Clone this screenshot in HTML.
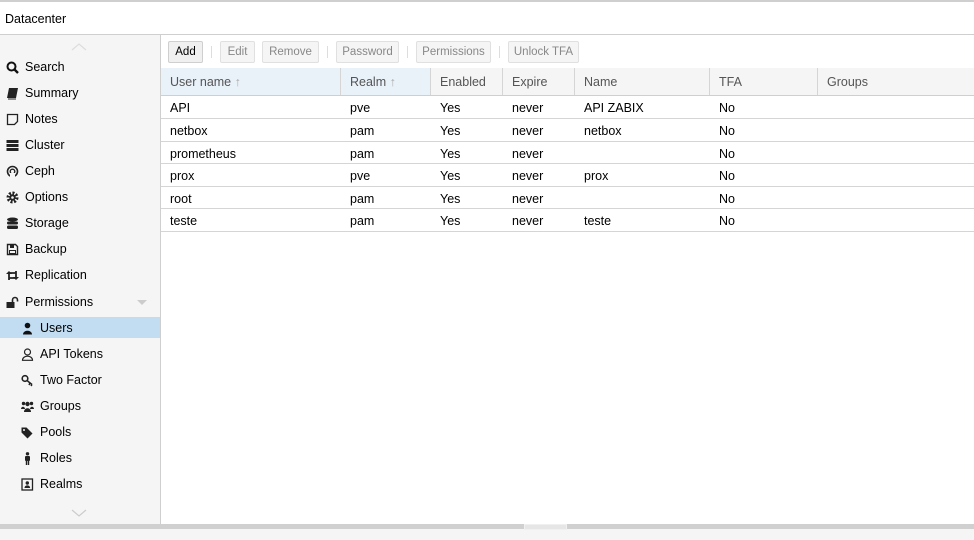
<!DOCTYPE html>
<html><head><meta charset="utf-8"><style>
*{margin:0;padding:0;box-sizing:border-box}
body{width:974px;height:540px;overflow:hidden;background:#fff;font-family:"Liberation Sans",Arial,sans-serif;font-size:12px;color:#000;position:relative}
.a{position:absolute}
.topb{left:0;top:0;width:974px;height:2px;background:#cfcfcf}
.hdr{left:0;top:2px;width:974px;height:33px;border-bottom:1px solid #cfcfcf;background:#fff}
.hdr span{position:absolute;left:5px;top:10px;font-size:12.5px}
.side{left:0;top:35px;width:161px;height:489px;background:#f5f5f5;border-right:1px solid #cfcfcf}
.it{position:absolute;left:0;width:160px;height:21px;line-height:21px;font-size:12.5px}
.it .ic{position:absolute;left:6px;top:5px;width:13px;height:13px}
.it .t{position:absolute;left:25px;top:1px}
.sub .ic{left:21px}.sub .t{left:40px}
.sel{background:#c2ddf2}
.tb{left:161px;top:35px;width:813px;height:33px;background:#fff}
.btn{position:absolute;top:6px;height:22px;line-height:20px;border:1px solid #e0e0e0;border-radius:2px;background:#f5f5f5;color:#888;font-size:11.5px;text-align:center}
.btn.on{color:#000;border-color:#cfcfcf;background:#f0f0f0}
.sep{position:absolute;top:11px;width:1px;height:12px;background:#ddd}
.gh{left:161px;top:68px;width:813px;height:28px;background:#f5f5f5;border-bottom:1px solid #cfcfcf}
.gh div{position:absolute;top:0;height:27px;line-height:28px;padding-left:9px;color:#555;font-size:12.5px;border-right:1px solid #d5d5d5}
.row{position:absolute;left:161px;width:813px;border-bottom:1px solid #d5d5d5;font-size:12.5px}
.row div{position:absolute;top:5px}
.bot{left:0;top:524px;width:974px;height:5px;background:#d0d0d0}
.bot2{left:0;top:529px;width:974px;height:11px;background:#f5f5f5}
</style></head><body>
<div class="a topb"></div>
<div class="a hdr"><span>Datacenter</span></div>
<div class="a side">
<svg class="a" style="left:71px;top:8px" width="16" height="8"><path d="M1 7L8 1L15 7" fill="none" stroke="#ddd" stroke-width="1.2"/></svg>
<div class="it" style="top:21px"><svg class="ic" viewBox="0 0 13 13"><circle cx="5.5" cy="5.5" r="4" fill="none" stroke="#111" stroke-width="2"/><path d="M8.5 8.5L12 12" stroke="#111" stroke-width="2.4"/></svg><span class="t">Search</span></div>
<div class="it" style="top:47px"><svg class="ic" viewBox="0 0 13 13"><path d="M3 1h9l-2 10H1z" fill="#222"/><path d="M2 12h8" stroke="#222"/></svg><span class="t">Summary</span></div>
<div class="it" style="top:73px"><svg class="ic" viewBox="0 0 13 13"><path d="M1.5 1.5h10v7l-3 3h-7z" fill="none" stroke="#222" stroke-width="1.3"/></svg><span class="t">Notes</span></div>
<div class="it" style="top:99px"><svg class="ic" viewBox="0 0 13 13"><rect x="0.5" y="1" width="12" height="3" fill="#222"/><rect x="0.5" y="5" width="12" height="3" fill="#222"/><rect x="0.5" y="9" width="12" height="3" fill="#222"/></svg><span class="t">Cluster</span></div>
<div class="it" style="top:125px"><svg class="ic" viewBox="0 0 13 13"><circle cx="6.5" cy="6.5" r="5" fill="none" stroke="#222" stroke-width="1.6"/><circle cx="6.5" cy="6.5" r="2.3" fill="none" stroke="#222" stroke-width="1.4"/><rect x="4" y="8" width="5" height="5" fill="#f5f5f5"/></svg><span class="t">Ceph</span></div>
<div class="it" style="top:151px"><svg class="ic" viewBox="0 0 13 13"><circle cx="6.5" cy="6.5" r="4.5" fill="none" stroke="#222" stroke-width="3" stroke-dasharray="2 1.5"/><circle cx="6.5" cy="6.5" r="3.2" fill="#222"/><circle cx="6.5" cy="6.5" r="1.3" fill="#f5f5f5"/></svg><span class="t">Options</span></div>
<div class="it" style="top:177px"><svg class="ic" viewBox="0 0 13 13"><ellipse cx="6.5" cy="2.5" rx="5.5" ry="2" fill="#222"/><rect x="1" y="4.5" width="11" height="3" rx="1.5" fill="#222"/><rect x="1" y="8.5" width="11" height="3.5" rx="1.5" fill="#222"/></svg><span class="t">Storage</span></div>
<div class="it" style="top:203px"><svg class="ic" viewBox="0 0 13 13"><path d="M1.5 1.5h8l2 2v8h-10z" fill="none" stroke="#222" stroke-width="1.4"/><rect x="4" y="2" width="4" height="3" fill="#222"/><rect x="3.5" y="7.5" width="6" height="3" fill="none" stroke="#222"/></svg><span class="t">Backup</span></div>
<div class="it" style="top:229px"><svg class="ic" viewBox="0 0 13 13"><path d="M3 11V4h7M10 2v7H3" fill="none" stroke="#222" stroke-width="1.8"/><path d="M0 5l3-3 3 3zM7 8l3 3 3-3z" fill="#222"/></svg><span class="t">Replication</span></div>
<div class="it" style="top:256px"><svg class="ic" viewBox="0 0 13 13"><rect x="0.5" y="6" width="8" height="6" fill="#222"/><path d="M6.5 6V4a2.5 2.5 0 0 1 5 0v1.5" fill="none" stroke="#222" stroke-width="1.6"/></svg><span class="t">Permissions</span><svg class="a" style="left:137px;top:9px" width="10" height="5"><path d="M0 0h10L5 5z" fill="#ccc"/></svg></div>
<div class="it sub sel" style="top:282px"><svg class="ic" viewBox="0 0 13 13"><circle cx="6.5" cy="3.5" r="2.8" fill="#111"/><path d="M2 12.5c0-5 9-5 9 0z" fill="#111"/></svg><span class="t">Users</span></div>
<div class="it sub" style="top:308px"><svg class="ic" viewBox="0 0 13 13"><circle cx="6.5" cy="4" r="3" fill="none" stroke="#222" stroke-width="1.2"/><path d="M1.5 12.3c0-5.5 10-5.5 10 0z" fill="none" stroke="#222" stroke-width="1.2"/></svg><span class="t">API Tokens</span></div>
<div class="it sub" style="top:334px"><svg class="ic" viewBox="0 0 13 13"><circle cx="4" cy="4.5" r="2.8" fill="none" stroke="#222" stroke-width="1.6"/><path d="M6 6.5l5 4M9 9l-1 2M11 10.5l-1 1.5" stroke="#222" stroke-width="1.5" fill="none"/></svg><span class="t">Two Factor</span></div>
<div class="it sub" style="top:360px"><svg class="ic" viewBox="0 0 13 13"><circle cx="6.5" cy="4" r="2.2" fill="#222"/><circle cx="2.5" cy="3.5" r="1.7" fill="#222"/><circle cx="10.5" cy="3.5" r="1.7" fill="#222"/><path d="M3 12c0-5 7-5 7 0z" fill="#222"/><path d="M0 9c0-3 4-3 4 0zM9 9c0-3 4-3 4 0z" fill="#222"/></svg><span class="t">Groups</span></div>
<div class="it sub" style="top:386px"><svg class="ic" viewBox="0 0 13 13"><path d="M0.5 1.5h5l6 6-5 5-6-6z" fill="#222"/><circle cx="3" cy="4" r="1" fill="#f5f5f5"/></svg><span class="t">Pools</span></div>
<div class="it sub" style="top:412px"><svg class="ic" viewBox="0 0 13 13"><circle cx="6.5" cy="1.8" r="1.7" fill="#222"/><rect x="4" y="4" width="5" height="5" rx="1" fill="#222"/><rect x="4.8" y="8" width="1.4" height="5" fill="#222"/><rect x="6.8" y="8" width="1.4" height="5" fill="#222"/></svg><span class="t">Roles</span></div>
<div class="it sub" style="top:438px"><svg class="ic" viewBox="0 0 13 13"><rect x="1" y="1" width="10.5" height="11" fill="none" stroke="#222" stroke-width="1.3"/><circle cx="6.3" cy="5" r="1.7" fill="#222"/><path d="M3.5 10c0-3.5 5.6-3.5 5.6 0z" fill="#222"/></svg><span class="t">Realms</span></div>
<svg class="a" style="left:71px;top:474px" width="16" height="8"><path d="M1 1L8 7L15 1" fill="none" stroke="#ccc" stroke-width="1.2"/></svg>
</div>
<div class="a tb">
<div class="btn on" style="left:7px;width:35px">Add</div>
<div class="sep" style="left:50px"></div>
<div class="btn" style="left:59px;width:35px">Edit</div>
<div class="btn" style="left:101px;width:57px">Remove</div>
<div class="sep" style="left:166px"></div>
<div class="btn" style="left:175px;width:63px">Password</div>
<div class="sep" style="left:246px"></div>
<div class="btn" style="left:255px;width:75px">Permissions</div>
<div class="sep" style="left:338px"></div>
<div class="btn" style="left:347px;width:71px">Unlock TFA</div>
</div>
<div class="a gh">
<div style="left:0;width:180px;background:#e9f1f9">User name <span style="color:#aaa">↑</span></div>
<div style="left:180px;width:90px;background:#e9f1f9">Realm <span style="color:#aaa">↑</span></div>
<div style="left:270px;width:72px">Enabled</div>
<div style="left:342px;width:72px">Expire</div>
<div style="left:414px;width:135px">Name</div>
<div style="left:549px;width:108px">TFA</div>
<div style="left:657px;width:156px;border-right:none">Groups</div>
</div>
<div class="row" style="top:96px;height:23px"><div style="left:9px">API</div><div style="left:189px">pve</div><div style="left:279px">Yes</div><div style="left:351px">never</div><div style="left:423px">API ZABIX</div><div style="left:558px">No</div></div>
<div class="row" style="top:119px;height:23px"><div style="left:9px">netbox</div><div style="left:189px">pam</div><div style="left:279px">Yes</div><div style="left:351px">never</div><div style="left:423px">netbox</div><div style="left:558px">No</div></div>
<div class="row" style="top:142px;height:22px"><div style="left:9px">prometheus</div><div style="left:189px">pam</div><div style="left:279px">Yes</div><div style="left:351px">never</div><div style="left:558px">No</div></div>
<div class="row" style="top:164px;height:23px"><div style="left:9px">prox</div><div style="left:189px">pve</div><div style="left:279px">Yes</div><div style="left:351px">never</div><div style="left:423px">prox</div><div style="left:558px">No</div></div>
<div class="row" style="top:187px;height:22px"><div style="left:9px">root</div><div style="left:189px">pam</div><div style="left:279px">Yes</div><div style="left:351px">never</div><div style="left:558px">No</div></div>
<div class="row" style="top:209px;height:23px"><div style="left:9px">teste</div><div style="left:189px">pam</div><div style="left:279px">Yes</div><div style="left:351px">never</div><div style="left:423px">teste</div><div style="left:558px">No</div></div>
<div class="a bot"></div>
<div class="a bot2"></div>
<div class="a" style="left:524px;top:524px;width:43px;height:6px;background:#e6e6e6;border:1px solid #f0f0f0"></div>
</body></html>
